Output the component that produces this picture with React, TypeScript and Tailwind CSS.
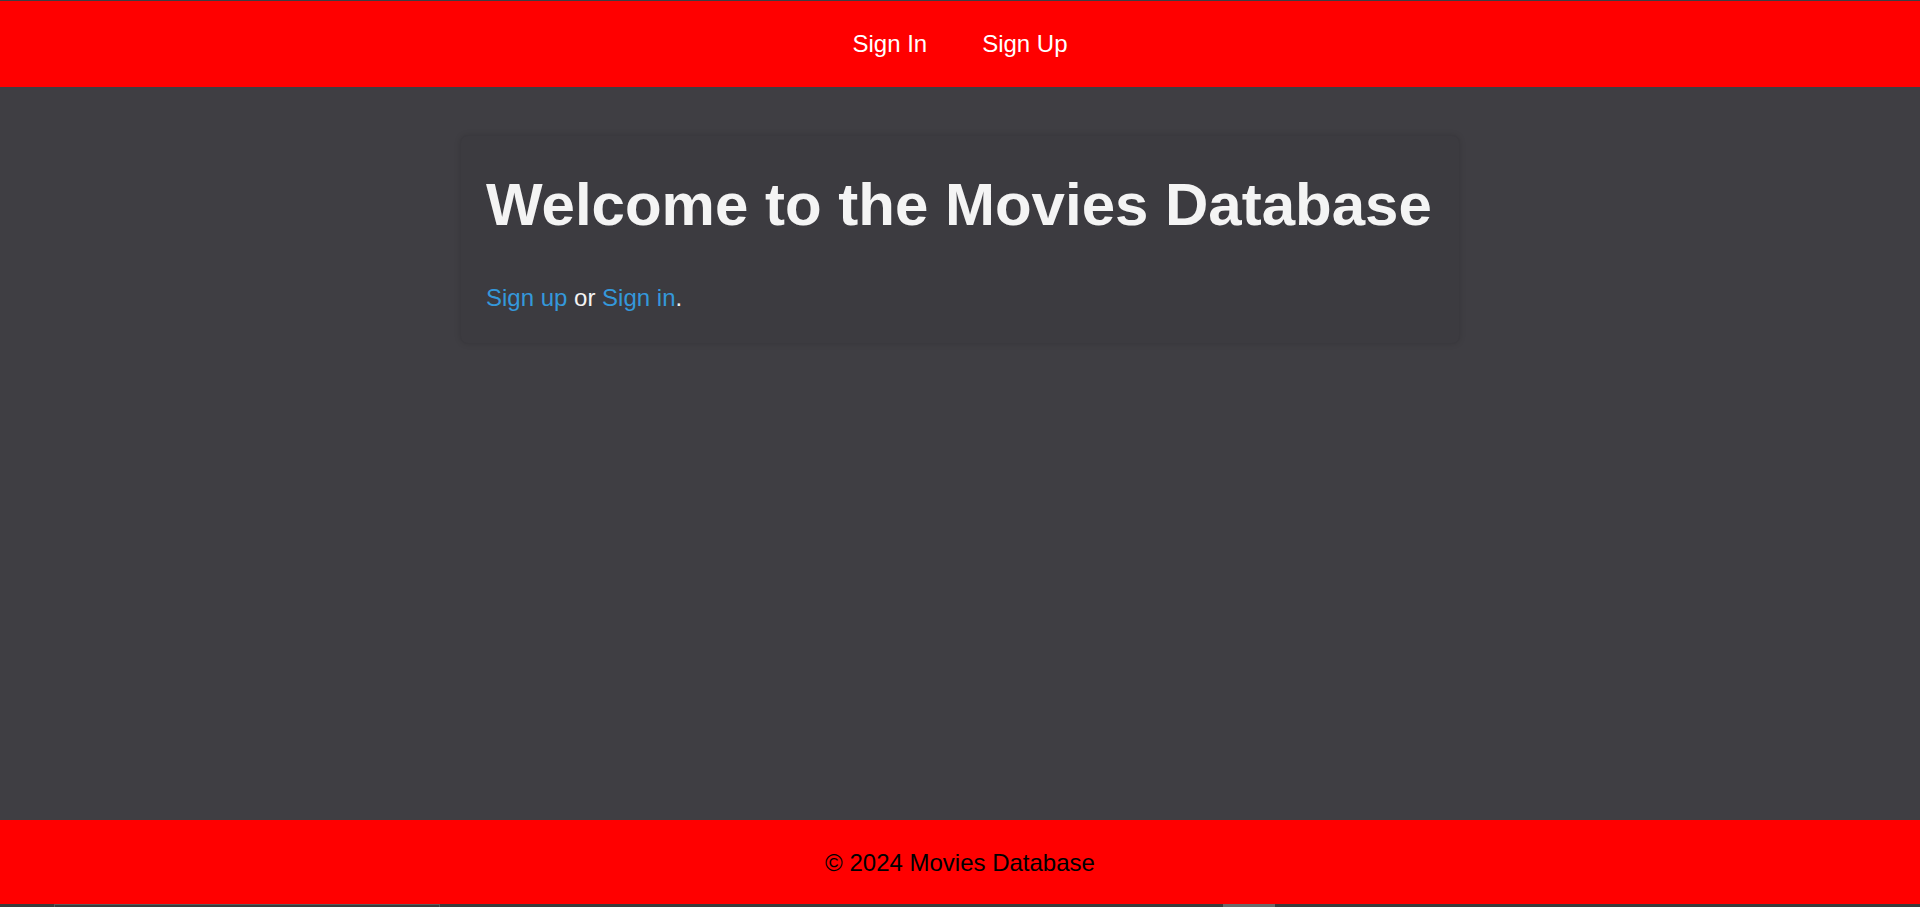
import React from 'react';

const NavLink: React.FC<{ label: string }> = ({ label }) => (
  <a href="#" className="text-white text-2xl no-underline">
    {label}
  </a>
);

export default function App() {
  return (
    <div
      className="min-h-screen flex flex-col bg-[#3f3e43] border-t border-[#3f3e43]"
      style={{ fontFamily: '"Liberation Sans", Arial, sans-serif' }}
    >
      <header className="h-[86px] bg-[#ff0000] flex items-center justify-center gap-[55px]">
        <NavLink label="Sign In" />
        <NavLink label="Sign Up" />
      </header>

      <main className="flex-1 pt-12">
        <div className="w-[1000px] mx-auto bg-[#3c3b40] rounded-lg shadow-[0_0_6px_rgba(0,0,0,0.12)] border border-[#3a393e] pl-[25px] pr-6 pt-[34px] pb-[31px]">
          <h1 className="text-[60px] font-bold leading-[1.15] text-[#f4f4f4]">
            Welcome to the Movies Database
          </h1>
          <p className="mt-[45px] text-2xl leading-[1.15] text-[#f4f4f4]">
            <a href="#" className="text-[#3498db]">Sign up</a> or{' '}
            <a href="#" className="text-[#3498db]">Sign in</a>.
          </p>
        </div>
      </main>

      <footer className="h-[84px] bg-[#ff0000] flex items-center justify-center pt-[2px]">
        <p className="text-2xl text-black">© 2024 Movies Database</p>
      </footer>

      <div className="h-[3px] bg-[#3b3b3b] flex">
        <div className="ml-[54px] w-[386px] border-t border-x border-[#5a5a5a]" />
        <div className="ml-[783px] w-[52px] bg-[#6a6a6a]" />
      </div>
    </div>
  );
}
